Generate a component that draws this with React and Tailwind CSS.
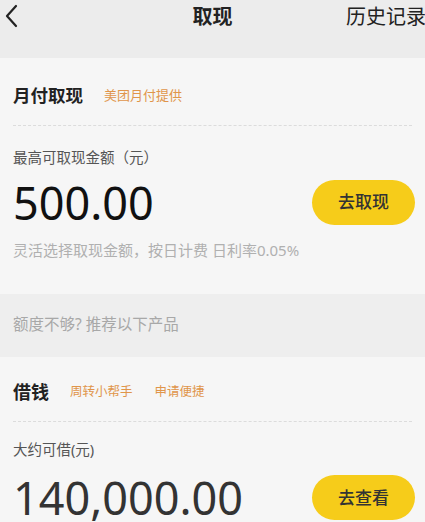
import React from 'react';

const font = { fontFamily: '"Noto Sans", "Noto Sans CJK SC", sans-serif' };

const Tag = ({ children }) => (
    <span className="text-[12.5px] text-[#e0954a] leading-none">{children}</span>
);

const Dashed = () => (
    <div className="border-t border-dashed border-[#dcdcdc] mx-[13px]"></div>
);

const Row = ({ label, amount, action, amountColor, gap }) => (
    <div className="pl-[13px] pr-[10px]">
        <p className="text-[14.5px] text-[#555] leading-none">{label}</p>
        <div className={`flex items-center justify-between ${gap}`}>
            <span className={`text-[45px] leading-none ${amountColor}`}>{amount}</span>
            <button className="w-[103px] h-[45px] rounded-full bg-[#f6cc1a] text-[17px] text-[#333] font-medium">
                {action}
            </button>
        </div>
    </div>
);

export default function App() {
    return (
        <div className="w-[425px] h-[522px] overflow-hidden bg-[#f5f5f5]" style={font}>
            <div className="h-[58px] bg-[#ececec] relative flex items-start pt-[2px]">
                <svg width="18" height="26" viewBox="0 0 18 26" className="ml-[3px] mt-[1px]">
                    <path d="M13 3 L4 13 L13 23" fill="none" stroke="#222" strokeWidth="2.2" strokeLinecap="round" strokeLinejoin="round" />
                </svg>
                <span className="absolute left-1/2 -translate-x-1/2 top-[2px] text-[20px] font-bold text-[#222]">取现</span>
                <span className="absolute left-[346px] top-[2px] text-[20px] text-[#222] whitespace-nowrap">历史记录</span>
            </div>

            <div className="bg-[#f6f6f6]">
                <div className="flex items-center gap-[21px] px-[13px] pt-[8px] h-[67px]">
                    <span className="text-[17.5px] font-bold text-[#222]">月付取现</span>
                    <span className="text-[13px] text-[#e0954a] leading-none">美团月付提供</span>
                </div>
                <Dashed />
                <div className="pt-[24px] pb-[18px]">
                    <Row label="最高可取现金额（元）" amount="500.00" action="去取现" amountColor="text-[#111]" gap="mt-[15px]" />
                    <p className="px-[13px] mt-[18px] text-[15px] text-[#b0b0b0] leading-none">
                        灵活选择取现金额，按日计费 日利率0.05%
                    </p>
                </div>
            </div>

            <div className="h-[18px] bg-[#f6f6f6]"></div>
            <div className="h-[63px] bg-[#eeeeee] flex items-center px-[13px]">
                <span className="text-[15.5px] text-[#a8a8a8]">额度不够? 推荐以下产品</span>
            </div>

            <div className="bg-[#f6f6f6]">
                <div className="flex items-center gap-[21px] px-[13px] pt-[8px] h-[64px]">
                    <span className="text-[18px] font-bold text-[#222]">借钱</span>
                    <div className="flex items-center gap-[22px]">
                        <Tag>周转小帮手</Tag>
                        <Tag>申请便捷</Tag>
                    </div>
                </div>
                <Dashed />
                <div className="pt-[20px]">
                    <Row label="大约可借(元)" amount="140,000.00" action="去查看" amountColor="text-[#333]" gap="mt-[19px]" />
                </div>
            </div>
        </div>
    );
}
